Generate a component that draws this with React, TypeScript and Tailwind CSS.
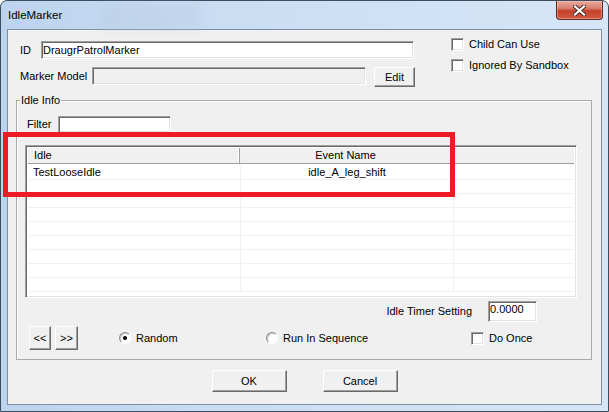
import React from 'react';

// classic 3D edges used by the dialog controls
const sunken =
  'border border-t-[#a0a0a0] border-l-[#a0a0a0] border-r-white border-b-white shadow-[inset_1px_1px_0_#696969,inset_-1px_-1px_0_#e3e3e3]';
const raised =
  'border border-t-white border-l-white border-r-[#696969] border-b-[#696969] shadow-[inset_-1px_-1px_0_#a0a0a0] bg-[#f0f0f0]';

const Button = ({ label, className = '' }: { label: string; className?: string }) => (
  <div className={`flex items-center justify-center ${raised} ${className}`}>{label}</div>
);

const CheckBox = ({ label, className = '' }: { label: string; className?: string }) => (
  <div className={`flex items-center h-[13px] ${className}`}>
    <div className={`w-[13px] h-[13px] shrink-0 bg-white ${sunken}`} />
    <span className="ml-[5px]">{label}</span>
  </div>
);

const Radio = ({ label, checked, className = '' }: { label: string; checked?: boolean; className?: string }) => (
  <div className={`flex items-center ${className}`}>
    <div className="w-[12px] h-[12px] shrink-0 rounded-full border border-t-[#8e8e8e] border-l-[#8e8e8e] border-r-white border-b-white bg-[radial-gradient(circle_at_60%_60%,#ffffff_40%,#e6e6e6)] shadow-[inset_1px_1px_0_#c8c8c8] flex items-center justify-center">
      {checked && <div className="w-[4px] h-[4px] rounded-full bg-black" />}
    </div>
    <span className="ml-[5px]">{label}</span>
  </div>
);

const CloseGlyph = () => (
  <svg width="13" height="11" viewBox="0 0 13 11">
    <path d="M2 1.5 L11 9.5 M11 1.5 L2 9.5" stroke="#4a2a26" strokeWidth="4.2" strokeLinecap="square" />
    <path d="M2 1.5 L11 9.5 M11 1.5 L2 9.5" stroke="#ffffff" strokeWidth="2.2" strokeLinecap="square" />
  </svg>
);

const rows = [
  { idle: 'TestLooseIdle', event: 'idle_A_leg_shift' },
  ...Array.from({ length: 8 }, () => ({ idle: '', event: '' })),
];

export default function App() {
  return (
    <div className="relative w-[609px] h-[412px] overflow-hidden font-['Liberation_Sans',Arial,sans-serif] text-[11px] leading-[13px] text-black">
      <div className="flex flex-col w-full h-full rounded-t-[7px] border border-[#3e4d5e] bg-[linear-gradient(90deg,#bcd4ee_0%,#c9ddf3_35%,#d6e6f7_100%)]">
        {/* title bar */}
        <div className="relative h-[28px] flex shrink-0">
          <div className="absolute left-[100px] top-[4px] w-[100px] h-[24px] bg-[#b4c6d9]/30 blur-[5px]" />
          <span className="relative pl-[7px] pt-[8px] text-[11.5px]">IdleMarker</span>
          <div className="relative ml-auto mr-[5px] w-[47px] h-[19px] rounded-b-[4px] border border-t-0 border-[#5c2b24] bg-[linear-gradient(#e8aa9e_0%,#d9806f_40%,#c4402b_55%,#cf5b3f_100%)] shadow-[inset_0_0_0_1px_rgba(255,200,190,0.45)] flex items-center justify-center">
            <CloseGlyph />
          </div>
        </div>

        {/* client area */}
        <div className="flex-1 mx-[6px] mb-[6px] border border-[#7f90a4] bg-[#f0f0f0] flex flex-col">
          {/* top fields */}
          <div className="flex pl-[12px]">
            <div className="flex flex-col">
              <div className="flex items-center mt-[11px] h-[18px]">
                <span className="w-[21px]">ID</span>
                <div className={`w-[373px] h-[18px] bg-white pl-[1px] pt-[2px] ${sunken}`}>DraugrPatrolMarker</div>
              </div>
              <div className="flex items-start mt-[8px]">
                <span className="w-[72px] h-[18px] flex items-center">Marker Model</span>
                <div className={`w-[274px] h-[18px] bg-[#f0f0f0] ${sunken}`} />
                <Button label="Edit" className="ml-[8px] w-[41px] h-[20px]" />
              </div>
            </div>
            <div className="flex flex-col ml-[36px]">
              <CheckBox label="Child Can Use" className="mt-[8px]" />
              <CheckBox label="Ignored By Sandbox" className="mt-[8px]" />
            </div>
          </div>

          {/* Idle Info group */}
          <div className="relative mt-[13px] ml-[8px] w-[576px] border border-[#a9a9a9] shadow-[inset_1px_1px_0_#ffffff] flex flex-col">
            <span className="absolute -top-[7px] left-[3px] px-[1px] bg-[#f0f0f0]">Idle Info</span>

            <div className="flex items-center mt-[15px] pl-[10px]">
              <span className="w-[31px]">Filter</span>
              <div className={`w-[113px] h-[17px] bg-white ${sunken}`} />
            </div>

            {/* list view */}
            <div className={`mt-[12px] ml-[8px] w-[552px] h-[153px] bg-white flex flex-col p-[2px] ${sunken}`}>
              <div className="flex h-[16px] shrink-0 bg-[#f0f0f0] border-b border-[#a0a0a0]">
                <div className="w-[212px] pl-[6px] flex items-center border-r border-[#a0a0a0] shadow-[inset_-1px_0_0_#ffffff]">Idle</div>
                <div className="w-[212px] flex items-center justify-center border-r border-[#a0a0a0]">Event Name</div>
              </div>
              <div className="pt-[2px] flex flex-col">
                {rows.map((r, i) => (
                  <div key={i} className="flex h-[14px] border-b border-[#f0f0f0]">
                    <div className="w-[213px] pl-[5px] flex items-center border-r border-[#f0f0f0]">{r.idle}</div>
                    <div className="w-[213px] flex items-center justify-center border-r border-[#f0f0f0]">{r.event}</div>
                  </div>
                ))}
              </div>
            </div>

            <div className="flex items-center justify-end mt-[3px] pr-[54px]">
              <span className="mr-[16px]">Idle Timer Setting</span>
              <div className={`w-[49px] h-[21px] bg-white pl-[1px] pt-[1px] ${sunken}`}>0.0000</div>
            </div>

            <div className="flex items-center mt-[4px] mb-[9px] pl-[12px] h-[24px]">
              <Button label="<<" className="w-[22px] h-[24px]" />
              <Button label=">>" className="ml-[4px] w-[23px] h-[24px]" />
              <Radio label="Random" checked className="ml-[41px] w-[147px]" />
              <Radio label="Run In Sequence" className="w-[205px]" />
              <CheckBox label="Do Once" />
            </div>
          </div>

          <div className="flex justify-center gap-[36px] mt-[10px]">
            <Button label="OK" className="w-[75px] h-[22px]" />
            <Button label="Cancel" className="w-[75px] h-[22px]" />
          </div>
        </div>
      </div>

      {/* red highlight drawn over the list */}
      <div className="absolute left-[3px] top-[132px] w-[452px] h-[65px] border-[5px] border-[#ed1c24]" />
    </div>
  );
}
